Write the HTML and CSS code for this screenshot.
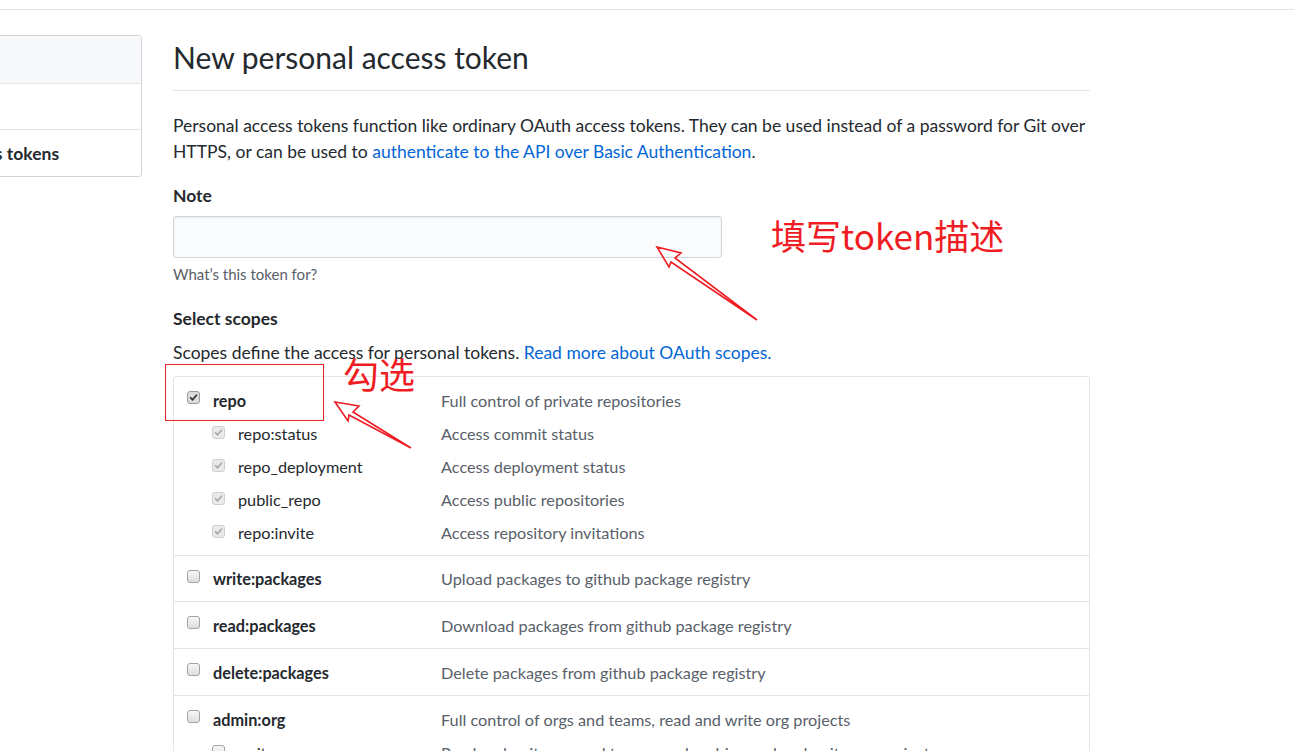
FILE: index.html
```html
<!DOCTYPE html>
<html lang="en">
<head>
<meta charset="utf-8">
<title>New personal access token</title>
<link rel="stylesheet" href="styles.css">
</head>
<body>
<div class="page">
  <div class="topbar"></div>
  <div class="layout">
    <nav class="menu">
      <div class="menu-item menu-item-hover">GitHub Apps</div>
      <div class="menu-item">OAuth Apps</div>
      <div class="menu-item selected">Personal access tokens</div>
    </nav>
    <main class="main">
      <h2 class="subhead">New personal access token</h2>
      <p class="lead">Personal access tokens function like ordinary OAuth access tokens. They can be used instead of a password for Git over HTTPS, or can be used to <a href="#">authenticate to the API over Basic Authentication</a>.</p>

      <div class="form-group note-group">
        <div class="label">Note</div>
        <input class="input" type="text" aria-label="Note">
        <div class="note">What’s this token for?</div>
      </div>

      <div class="form-group scopes-group">
        <div class="label">Select scopes</div>
        <p class="scopes-intro">Scopes define the access for personal tokens. <a href="#">Read more about OAuth scopes.</a></p>

        <div class="scopes">
          <div class="scope-row">
            <div class="line">
              <div class="left"><span class="cb checked"><svg viewBox="0 0 13 13"><path d="M3 6.8 L5.4 9.2 L10 3.8"/></svg></span><span class="name">repo</span></div>
              <div class="desc">Full control of private repositories</div>
            </div>
            <div class="line sub">
              <div class="left"><span class="cb checked disabled"><svg viewBox="0 0 13 13"><path d="M3 6.8 L5.4 9.2 L10 3.8"/></svg></span><span class="name">repo:status</span></div>
              <div class="desc">Access commit status</div>
            </div>
            <div class="line sub">
              <div class="left"><span class="cb checked disabled"><svg viewBox="0 0 13 13"><path d="M3 6.8 L5.4 9.2 L10 3.8"/></svg></span><span class="name">repo_deployment</span></div>
              <div class="desc">Access deployment status</div>
            </div>
            <div class="line sub">
              <div class="left"><span class="cb checked disabled"><svg viewBox="0 0 13 13"><path d="M3 6.8 L5.4 9.2 L10 3.8"/></svg></span><span class="name">public_repo</span></div>
              <div class="desc">Access public repositories</div>
            </div>
            <div class="line sub">
              <div class="left"><span class="cb checked disabled"><svg viewBox="0 0 13 13"><path d="M3 6.8 L5.4 9.2 L10 3.8"/></svg></span><span class="name">repo:invite</span></div>
              <div class="desc">Access repository invitations</div>
            </div>
          </div>
          <div class="scope-row">
            <div class="line">
              <div class="left"><span class="cb"></span><span class="name">write:packages</span></div>
              <div class="desc">Upload packages to github package registry</div>
            </div>
          </div>
          <div class="scope-row">
            <div class="line">
              <div class="left"><span class="cb"></span><span class="name">read:packages</span></div>
              <div class="desc">Download packages from github package registry</div>
            </div>
          </div>
          <div class="scope-row">
            <div class="line">
              <div class="left"><span class="cb"></span><span class="name">delete:packages</span></div>
              <div class="desc">Delete packages from github package registry</div>
            </div>
          </div>
          <div class="scope-row">
            <div class="line">
              <div class="left"><span class="cb"></span><span class="name">admin:org</span></div>
              <div class="desc">Full control of orgs and teams, read and write org projects</div>
            </div>
            <div class="line sub">
              <div class="left"><span class="cb"></span><span class="name">write:org</span></div>
              <div class="desc">Read and write org and team membership, read and write org projects</div>
            </div>
            <div class="line sub">
              <div class="left"><span class="cb"></span><span class="name">read:org</span></div>
              <div class="desc">Read org and team membership, read org projects</div>
            </div>
          </div>
        </div>
      </div>
    </main>
  </div>

  <!-- red annotations drawn over the screenshot -->
  <div class="anno anno-text anno-note">填写token描述</div>
  <div class="anno anno-text anno-check">勾选</div>
  <div class="anno anno-box"></div>
  <svg class="anno anno-arrows" width="1294" height="751" viewBox="0 0 1294 751">
    <polygon points="657,247 681,253 675,258 757,320 671,262 669,267"/>
    <polygon points="335,402 359,406 353,412 411,448 349,415 348,421"/>
  </svg>
</div>
</body>
</html>
```
FILE: styles.css
```css
* { box-sizing: border-box; }

html, body { margin: 0; padding: 0; background: #fff; }

body {
  font-family: Lato, "Noto Sans", sans-serif;
  font-size: 17.5px;
  line-height: 1.5;
  color: #24292e;
  overflow: hidden;
}

a { color: #0366d6; text-decoration: none; }

.page { position: relative; width: 1294px; height: 751px; overflow: hidden; }

.topbar {
  height: 10px;
  border-bottom: 1px solid #e1e4e8;
}

.layout {
  display: flex;
  align-items: flex-start;
  gap: 31px;
  margin-top: 25px;
  margin-left: -150px;
}

/* sidebar menu */
.menu {
  flex: 0 0 292px;
  border: 1px solid #d1d5da;
  border-radius: 3px;
  overflow: hidden;
}
.menu-item {
  height: 46.6px;
  display: flex;
  align-items: center;
  padding-left: 30px;
  padding-top: 2px;
  border-top: 1px solid #e1e4e8;
  color: #24292e;
  white-space: nowrap;
}
.menu-item:first-child { border-top: 0; }
.menu-item-hover { background: #f6f8fa; }
.menu-item.selected { font-weight: 700; }

/* main column */
.main { flex: 0 0 917px; }

.subhead {
  margin: 0 0 22px;
  padding-bottom: 10px;
  border-bottom: 1px solid #e1e4e8;
  font-size: 30px;
  font-weight: 400;
  line-height: 45px;
  color: #24292e;
}

.lead { margin: 0; }

.form-group { margin: 18.75px 0; }
.note-group { margin-top: 17px; }
.scopes-group { margin-top: 20.5px; }

.label {
  font-weight: 700;
  margin-bottom: 7.5px;
}

.input {
  display: block;
  width: 549px;
  height: 42px;
  margin: 0;
  padding: 6px 10px;
  border: 1px solid #d1d5da;
  border-radius: 3px;
  background: #fafbfc;
  box-shadow: inset 0 1px 2px rgba(27, 31, 35, 0.075);
  font: inherit;
}

.note {
  margin: 5px 0 2.5px;
  font-size: 15px;
  line-height: 22px;
  color: #586069;
}

.scopes-intro { margin: 0 0 10px; }

/* scopes table */
.scopes {
  border: 1px solid #e1e4e8;
  border-radius: 3px;
  font-size: 16.25px;
}
.scope-row {
  padding: 7.6px 0 5.2px;
  border-top: 1px solid #e1e4e8;
}
.scope-row:first-child { border-top: 0; }

.line {
  display: flex;
  align-items: center;
  height: 33px;
  white-space: nowrap;
}
.left {
  flex: 0 0 267px;
  display: flex;
  align-items: center;
  gap: 13px;
  padding-left: 13px;
}
.line.sub .left { padding-left: 38px; }

.name { font-weight: 700; }
.line.sub .name { font-weight: 400; }

.desc { color: #586069; }

.cb {
  flex: 0 0 13px;
  width: 13px;
  height: 13px;
  margin-bottom: 7px;
  border: 1px solid #a3a3a3;
  border-radius: 3px;
  background: linear-gradient(#f7f7f7, #dedede);
  display: flex;
}
.line.sub .cb { margin-bottom: 3px; }
.cb svg { width: 100%; height: 100%; }
.cb svg path {
  fill: none;
  stroke: #333;
  stroke-width: 2;
  stroke-linecap: round;
  stroke-linejoin: round;
}
.cb.checked { background: #dcdcdc; border-color: #9b9b9b; }
.cb.checked.disabled { background: #eaeaea; border-color: #cfcfcf; }
.cb.disabled svg path { stroke: #a9a9a9; }

/* annotations */
.anno { position: absolute; pointer-events: none; }
.anno-text {
  font-family: "Noto Sans CJK SC", "Noto Sans", sans-serif;
  color: #ef1c24;
  line-height: 1;
  white-space: nowrap;
}
.anno-note { left: 771px; top: 216.5px; font-size: 35px; }
.anno-check { left: 343px; top: 355px; font-size: 36px; }
.anno-box {
  left: 165px;
  top: 364px;
  width: 159px;
  height: 57px;
  border: 1px solid #e8262a;
}
.anno-arrows { left: 0; top: 0; }
.anno-arrows polygon {
  fill: none;
  stroke: #ef1c24;
  stroke-width: 1.6;
  stroke-linejoin: miter;
}
```
